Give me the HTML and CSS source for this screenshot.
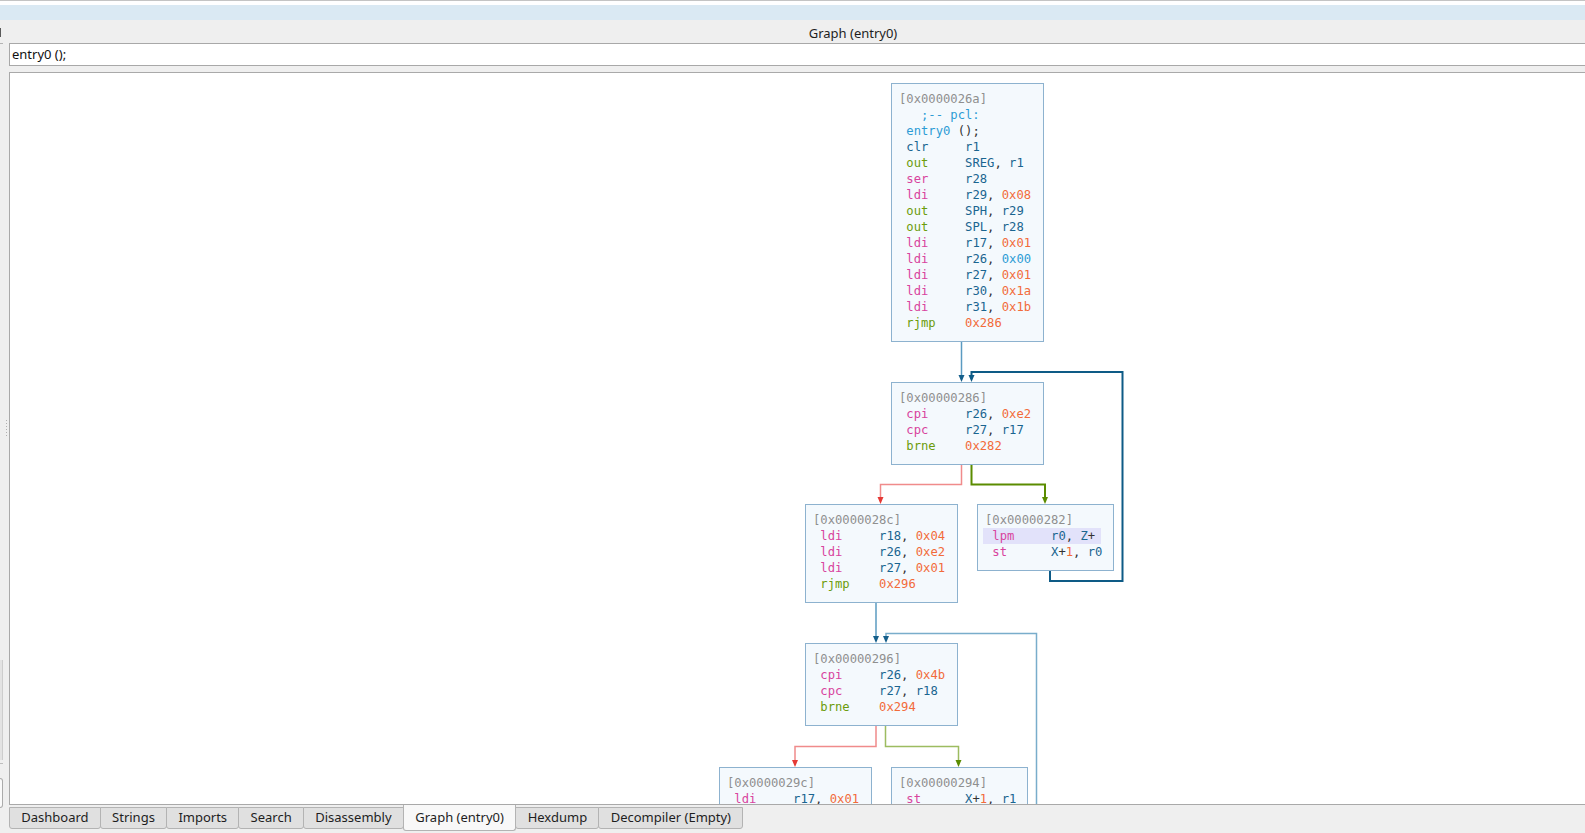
FILE: index.html
```html
<!DOCTYPE html>
<html>
<head>
<meta charset="utf-8">
<title>Graph (entry0)</title>
<link rel="stylesheet" href="styles.css">
</head>
<body>
<div class="app">
  <div class="top"></div>
  <div class="band"></div>
  <div class="body">
    <aside class="side">
      <span class="side-mark"></span>
      <span class="side-line"></span>
      <span class="side-grip"></span>
      <span class="side-panel"></span>
      <span class="side-line2"></span>
      <span class="side-box"></span>
    </aside>
    <section class="dock">
      <div class="dock-title">Graph (entry0)</div>
      <div class="sig">entry0 ();</div>
      <div class="canvas">
        <svg class="edges" width="1575" height="731" viewBox="10 73 1575 731">
          <g fill="none" stroke-linejoin="miter">
            <path d="M961.5 342 V376" stroke="#5b9bc1" stroke-width="1.5"/>
            <path d="M1050 571 V581 H1122.5 V372 H971.5 V376" stroke="#0e5b86" stroke-width="2"/>
            <path d="M961.5 465 V484.5 H880.5 V498" stroke="#f08b8b" stroke-width="1.5"/>
            <path d="M971.5 465 V484.5 H1045 V498" stroke="#5b8c00" stroke-width="2"/>
            <path d="M876 603 V637" stroke="#5b9bc1" stroke-width="1.5"/>
            <path d="M1036.5 812 V633.5 H886 V637" stroke="#79adcb" stroke-width="1.5"/>
            <path d="M876 726 V746.5 H795 V761" stroke="#f08b8b" stroke-width="1.5"/>
            <path d="M885.5 726 V746.5 H958.5 V761" stroke="#9dbc60" stroke-width="1.5"/>
          </g>
          <path d="M958.5 375 H964.5 L961.5 382 Z" fill="#155f8b"/>
          <path d="M968.5 375 H974.5 L971.5 382 Z" fill="#0e5b86"/>
          <path d="M877.5 497 H883.5 L880.5 504 Z" fill="#e53935"/>
          <path d="M1042 497 H1048 L1045 504 Z" fill="#5b8c00"/>
          <path d="M873 636 H879 L876 643 Z" fill="#155f8b"/>
          <path d="M883 636 H889 L886 643 Z" fill="#155f8b"/>
          <path d="M792 760 H798 L795 767 Z" fill="#e53935"/>
          <path d="M955.5 760 H961.5 L958.5 767 Z" fill="#5b8c00"/>
        </svg>

        <div class="node n1">
          <div class="ln h">[0x0000026a]</div>
          <div class="ln"><span class="c">   ;-- pcl:</span></div>
          <div class="ln"> <span class="c">entry0</span> <span class="p">();</span></div>
          <div class="ln"> <span class="r">clr</span>     <span class="r">r1</span></div>
          <div class="ln"> <span class="g">out</span>     <span class="r">SREG</span><span class="p">, </span><span class="r">r1</span></div>
          <div class="ln"> <span class="k">ser</span>     <span class="r">r28</span></div>
          <div class="ln"> <span class="k">ldi</span>     <span class="r">r29</span><span class="p">, </span><span class="n">0x08</span></div>
          <div class="ln"> <span class="g">out</span>     <span class="r">SPH</span><span class="p">, </span><span class="r">r29</span></div>
          <div class="ln"> <span class="g">out</span>     <span class="r">SPL</span><span class="p">, </span><span class="r">r28</span></div>
          <div class="ln"> <span class="k">ldi</span>     <span class="r">r17</span><span class="p">, </span><span class="n">0x01</span></div>
          <div class="ln"> <span class="k">ldi</span>     <span class="r">r26</span><span class="p">, </span><span class="c">0x00</span></div>
          <div class="ln"> <span class="k">ldi</span>     <span class="r">r27</span><span class="p">, </span><span class="n">0x01</span></div>
          <div class="ln"> <span class="k">ldi</span>     <span class="r">r30</span><span class="p">, </span><span class="n">0x1a</span></div>
          <div class="ln"> <span class="k">ldi</span>     <span class="r">r31</span><span class="p">, </span><span class="n">0x1b</span></div>
          <div class="ln"> <span class="g">rjmp</span>    <span class="n">0x286</span></div>
        </div>

        <div class="node n2">
          <div class="ln h">[0x00000286]</div>
          <div class="ln"> <span class="k">cpi</span>     <span class="r">r26</span><span class="p">, </span><span class="n">0xe2</span></div>
          <div class="ln"> <span class="k">cpc</span>     <span class="r">r27</span><span class="p">, </span><span class="r">r17</span></div>
          <div class="ln"> <span class="g">brne</span>    <span class="n">0x282</span></div>
        </div>

        <div class="node n3">
          <div class="ln h">[0x0000028c]</div>
          <div class="ln"> <span class="k">ldi</span>     <span class="r">r18</span><span class="p">, </span><span class="n">0x04</span></div>
          <div class="ln"> <span class="k">ldi</span>     <span class="r">r26</span><span class="p">, </span><span class="n">0xe2</span></div>
          <div class="ln"> <span class="k">ldi</span>     <span class="r">r27</span><span class="p">, </span><span class="n">0x01</span></div>
          <div class="ln"> <span class="g">rjmp</span>    <span class="n">0x296</span></div>
        </div>

        <div class="node n4 narrow">
          <div class="ln h">[0x00000282]</div>
          <div class="ln"><span class="hl"> <span class="k">lpm</span>     <span class="r">r0</span><span class="p">, </span><span class="r">Z</span><span class="p">+</span></span></div>
          <div class="ln"> <span class="k">st</span>      <span class="r">X</span><span class="p">+</span><span class="n">1</span><span class="p">, </span><span class="r">r0</span></div>
        </div>

        <div class="node n5">
          <div class="ln h">[0x00000296]</div>
          <div class="ln"> <span class="k">cpi</span>     <span class="r">r26</span><span class="p">, </span><span class="n">0x4b</span></div>
          <div class="ln"> <span class="k">cpc</span>     <span class="r">r27</span><span class="p">, </span><span class="r">r18</span></div>
          <div class="ln"> <span class="g">brne</span>    <span class="n">0x294</span></div>
        </div>

        <div class="node n6">
          <div class="ln h">[0x0000029c]</div>
          <div class="ln"> <span class="k">ldi</span>     <span class="r">r17</span><span class="p">, </span><span class="n">0x01</span></div>
        </div>

        <div class="node n7 narrow">
          <div class="ln h">[0x00000294]</div>
          <div class="ln"> <span class="k">st</span>      <span class="r">X</span><span class="p">+</span><span class="n">1</span><span class="p">, </span><span class="r">r1</span></div>
        </div>
      </div>
      <nav class="tabs">
        <span class="tab">Dashboard</span>
        <span class="tab">Strings</span>
        <span class="tab">Imports</span>
        <span class="tab">Search</span>
        <span class="tab">Disassembly</span>
        <span class="tab active">Graph (entry0)</span>
        <span class="tab">Hexdump</span>
        <span class="tab">Decompiler (Empty)</span>
      </nav>
    </section>
  </div>
</div>
</body>
</html>
```

FILE: styles.css
```css
* { box-sizing: border-box; }

html, body {
  margin: 0;
  padding: 0;
}

body {
  background: #efefef;
  font-family: "Noto Sans", "Open Sans", sans-serif;
  font-size: 13px;
  color: #1e1e1e;
  overflow: hidden;
}

.app {
  width: 1585px;
  height: 833px;
  display: flex;
  flex-direction: column;
  overflow: hidden;
}

.top {
  height: 5px;
  flex-shrink: 0;
  background: #ffffff;
  border-top: 1px solid #c4c4c4;
}

.band {
  height: 15px;
  flex-shrink: 0;
  background: #dae9f3;
}

.body {
  flex: 1;
  display: flex;
  min-height: 0;
}

/* left strip */
.side {
  width: 9px;
  flex-shrink: 0;
  display: flex;
  flex-direction: column;
  align-items: flex-start;
}
.side > span { display: block; flex-shrink: 0; }
.side-mark {
  margin-top: 8px;
  width: 1px;
  height: 9px;
  background: #5a5a5a;
}
.side-line {
  margin-top: 6px;
  width: 3px;
  height: 1px;
  background: #b3b3b3;
}
.side-grip {
  margin-top: 376px;
  margin-left: 6px;
  width: 1px;
  height: 17px;
  background: repeating-linear-gradient(to bottom, #b0b0b0 0 1px, transparent 1px 3px);
}
.side-panel {
  margin-top: 223px;
  width: 3px;
  height: 100px;
  background: #e3e3e3;
  border-right: 1px solid #cdcdcd;
}
.side-line2 {
  margin-top: 3px;
  width: 3px;
  height: 1px;
  background: #bdbdbd;
}
.side-box {
  margin-top: 14px;
  width: 3px;
  height: 30px;
  background: #fafafa;
  border: 1px solid #ababab;
  border-left: none;
  border-radius: 0 3px 3px 0;
}

/* dock */
.dock {
  flex: 1;
  min-width: 0;
  display: flex;
  flex-direction: column;
}

.dock-title {
  height: 23px;
  flex-shrink: 0;
  padding: 5px 0 2px 112px;
  line-height: 16px;
  text-align: center;
  color: #1e1e1e;
}

.sig {
  height: 23px;
  flex-shrink: 0;
  border: 1px solid #a8a8a8;
  border-right: none;
  background: #ffffff;
  padding-left: 2px;
  line-height: 21px;
  color: #111;
  margin-bottom: 6px;
}

.canvas {
  flex: 1;
  min-height: 0;
  position: relative;
  overflow: hidden;
  background: #ffffff;
  border: 1px solid #a9a9a9;
  border-right: none;
}

.edges {
  position: absolute;
  left: 0;
  top: 0;
}

.node {
  position: absolute;
  width: 153px;
  background: #f4f9fd;
  border: 1px solid #8db2cf;
  padding: 7px 0 10px 7px;
  font-family: "DejaVu Sans Mono", "Liberation Mono", monospace;
  font-size: 12.2px;
  line-height: 16px;
  color: #333;
}
.node.narrow { width: 137px; }

.n1 { left: 881px; top: 10px; }
.n2 { left: 881px; top: 309px; }
.n3 { left: 795px; top: 431px; }
.n4 { left: 967px; top: 431px; }
.n5 { left: 795px; top: 570px; }
.n6 { left: 709px; top: 694px; }
.n7 { left: 881px; top: 694px; }

.ln { white-space: pre; height: 16px; }
.h { color: #8f8f8f; }
.c { color: #2d9cd5; }
.r { color: #1a6590; }
.g { color: #6c9c0c; }
.k { color: #d8449e; }
.n { color: #f26b3a; }
.p { color: #333333; }

.hl {
  display: inline-block;
  background: #e2e2fa;
  margin-left: -2px;
  padding: 0 6px 0 2px;
}

/* tabs */
.tabs {
  height: 28px;
  flex-shrink: 0;
  display: flex;
  align-items: flex-start;
}

.tab {
  margin-top: 2px;
  margin-left: -1px;
  height: 22px;
  padding: 0 11.25px 1px;
  line-height: 19px;
  border: 1px solid #b3b3b3;
  border-radius: 0 0 3px 3px;
  background: #e0e0e0;
  color: #1e1e1e;
  white-space: nowrap;
}
.tab:first-child { margin-left: 0; }

.tab.active {
  margin-top: 0;
  height: 26px;
  border-top: none;
  padding: 3px 11.5px 1px;
  background: #f8f8f8;
  position: relative;
  z-index: 1;
}
```
